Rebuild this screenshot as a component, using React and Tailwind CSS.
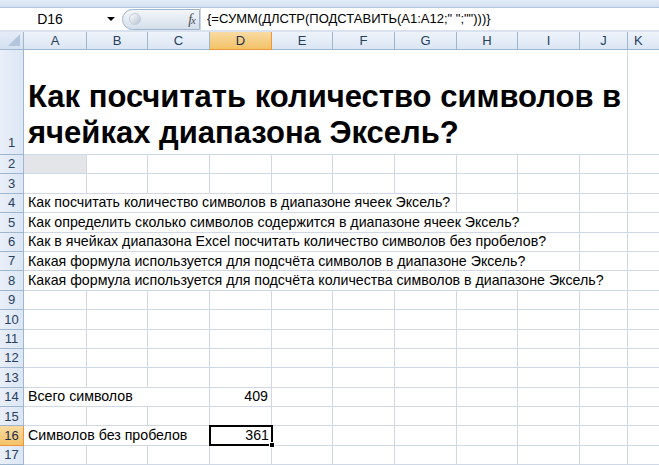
import React from "react";

const cols = [
  { name: "A", w: 63 },
  { name: "B", w: 61 },
  { name: "C", w: 62 },
  { name: "D", w: 62 },
  { name: "E", w: 61 },
  { name: "F", w: 62 },
  { name: "G", w: 62 },
  { name: "H", w: 61 },
  { name: "I", w: 62 },
  { name: "J", w: 48 },
];

// span = number of columns the text in A overflows into
const rows = [
  { n: 2, span: 1, gray: true },
  { n: 3, span: 1 },
  { n: 4, span: 7, text: "Как посчитать количество символов в диапазоне ячеек Эксель?" },
  { n: 5, span: 9, text: "Как определить сколько символов содержится в диапазоне ячеек Эксель?" },
  { n: 6, span: 9, text: "Как в ячейках диапазона Excel посчитать количество символов без пробелов?" },
  { n: 7, span: 9, text: "Какая формула используется для подсчёта символов в диапазоне Эксель?" },
  { n: 8, span: 10, text: "Какая формула используется для подсчёта количества символов в диапазоне Эксель?" },
  { n: 9, span: 1 },
  { n: 10, span: 1 },
  { n: 11, span: 1 },
  { n: 12, span: 1 },
  { n: 13, span: 1 },
  { n: 14, span: 3, text: "Всего символов", d: "409" },
  { n: 15, span: 1 },
  { n: 16, span: 3, text: "Символов без пробелов", d: "361", active: true },
  { n: 17, span: 1 },
];

function RowHead({ n, active, tall }) {
  return (
    <div
      className={
        "w-[24px] shrink-0 flex justify-center border-r border-b text-[13px] " +
        (tall ? "items-end pb-[2px] " : "items-center ") +
        (active
          ? "bg-gradient-to-b from-[#f9dba3] to-[#f2c266] border-[#f29536] text-[#1d2f4d]"
          : "bg-gradient-to-r from-[#e9eff8] to-[#dce6f4] border-[#9eb6ce] text-[#27405f]")
      }
    >
      {n}
    </div>
  );
}

function Row({ r }) {
  const spanW = cols.slice(0, r.span).reduce((s, c) => s + c.w, 0);
  const rest = cols.slice(r.span);
  return (
    <div className="flex h-[19.4px]">
      <RowHead n={r.n} active={r.active} />
      <div
        className={
          "shrink-0 flex items-center pl-[4px] border-r border-b border-[#d0d7e5] whitespace-nowrap text-[14.2px] text-black " +
          (r.gray ? "bg-[#e3e5e9]" : "")
        }
        style={{ width: spanW }}
      >
        {r.text}
      </div>
      {rest.map((c) =>
        c.name === "D" && r.d ? (
          <div
            key={c.name}
            className={
              "shrink-0 relative flex items-center justify-end pr-[3px] text-[14.2px] text-black border-b " +
              (r.active ? "border-[#d0d7e5]" : "border-r border-[#d0d7e5]")
            }
            style={{ width: c.w }}
          >
            {r.active && (
              <>
                <div className="absolute left-[-1px] top-[-1px] right-[-1px] bottom-[-1px] border-[2px] border-black" />
                <div className="absolute right-[-3px] bottom-[-3px] w-[6px] h-[6px] bg-black border border-white" />
              </>
            )}
            <span className="relative">{r.d}</span>
          </div>
        ) : (
          <div
            key={c.name}
            className="shrink-0 border-r border-b border-[#d0d7e5]"
            style={{ width: c.w }}
          />
        )
      )}
      <div className="flex-1 border-b border-[#d0d7e5]" />
    </div>
  );
}

export default function App() {
  return (
    <div className="w-[659px] h-[465px] overflow-hidden bg-white font-['Liberation_Sans',Arial,sans-serif]">
      {/* ribbon edge */}
      <div className="h-[8px] bg-gradient-to-b from-[#e3ecf7] to-[#d3e0f1] border-b border-[#b3c7df]" />

      {/* formula bar */}
      <div className="h-[22px] flex items-center bg-white">
        <div className="w-[100px] text-center text-[14px] text-black">D16</div>
        <div className="w-[22px] flex justify-center">
          <span className="block w-0 h-0 border-l-[4px] border-r-[4px] border-t-[4px] border-l-transparent border-r-transparent border-t-black" />
        </div>
        <div className="w-[78px] h-[21px] rounded-l-full border border-[#9fb3cc] bg-gradient-to-b from-[#f3f6fa] to-[#d5dfeb] flex items-center justify-between pl-[6px] pr-[4px]">
          <span className="w-[12px] h-[12px] rounded-full bg-gradient-to-br from-white to-[#b5c2d2] border border-[#c3cedb]" />
          <span className="font-['Liberation_Serif',serif] italic text-[14px] text-[#4d4d4d] tracking-[-1px]">
            f<span className="text-[11px]">x</span>
          </span>
        </div>
        <div className="flex-1 h-full flex items-center pl-[6px] border-l border-[#c9d5e4] text-[13px] text-black whitespace-nowrap">
          {'{=СУММ(ДЛСТР(ПОДСТАВИТЬ(A1:A12;" ";"")))}'}
        </div>
      </div>
      <div className="h-[2px] bg-[#d9e3ef]" />

      {/* column headers */}
      <div className="flex h-[18px]">
        <div className="w-[24px] shrink-0 relative bg-gradient-to-b from-[#e4ecf7] to-[#d5e1f1] border-r border-b border-[#9eb6ce]">
          <svg className="absolute right-[3px] bottom-[3px]" width="12" height="12">
            <polygon points="12,0 12,12 0,12" fill="#b4c6dd" />
          </svg>
        </div>
        {cols.map((c) => (
          <div
            key={c.name}
            className={
              "shrink-0 flex items-center justify-center border-r border-b text-[13px] " +
              (c.name === "D"
                ? "bg-gradient-to-b from-[#f9dba3] to-[#f2c266] border-[#f29536] text-[#1d2f4d]"
                : "bg-gradient-to-b from-[#eef3fa] to-[#dbe6f4] border-[#9eb6ce] text-[#27405f]")
            }
            style={{ width: c.w }}
          >
            {c.name}
          </div>
        ))}
        <div className="flex-1 flex items-center pl-[6px] bg-gradient-to-b from-[#eef3fa] to-[#dbe6f4] border-b border-[#9eb6ce] text-[13px] text-[#27405f]">
          K
        </div>
      </div>

      {/* row 1 - merged title */}
      <div className="flex h-[105px]">
        <RowHead n={1} tall />
        <div className="w-[604px] shrink-0 flex items-end pl-[4px] pb-[3px] border-r border-b border-[#d0d7e5]">
          <div className="text-[31px] font-bold leading-[36px] text-black whitespace-nowrap">
            Как посчитать количество символов в
            <br />
            ячейках диапазона Эксель?
          </div>
        </div>
        <div className="flex-1 border-b border-[#d0d7e5]" />
      </div>

      {rows.map((r) => (
        <Row key={r.n} r={r} />
      ))}
    </div>
  );
}
